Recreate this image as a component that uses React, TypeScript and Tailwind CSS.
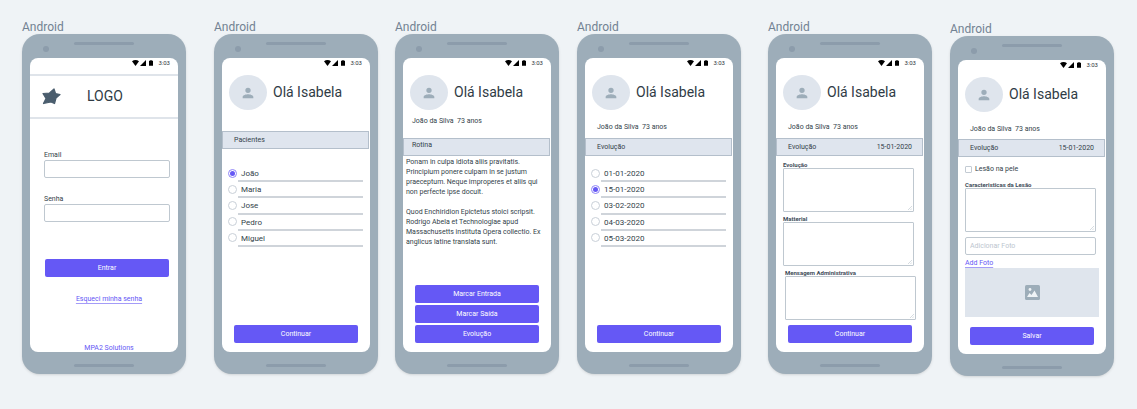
import type { ReactNode } from "react";

function StatusBar() {
  return (
    <div className="flex h-2.5 shrink-0 items-center justify-end gap-[3px] pr-2 text-black">
      <svg viewBox="0 0 24 20" className="h-[6px] w-[7px]" fill="currentColor" aria-hidden="true">
        <path d="M0 4C7-1.500 17-1.500 24 4L12 20Z" />
      </svg>
      <svg viewBox="0 0 20 20" className="-ml-[2px] size-[6px]" fill="currentColor" aria-hidden="true">
        <path d="M20 0V20H0Z" />
      </svg>
      <svg viewBox="0 0 14 20" className="h-[6px] w-[4px]" fill="currentColor" aria-hidden="true">
        <path d="M4 0H10V2H14V20H0V2H4Z" />
      </svg>
      <span className="ml-[2px] text-[6px] leading-[8px] text-[#30363c]">3:03</span>
    </div>
  );
}

function Phone({ className = "", children }: { className?: string; children: ReactNode }) {
  return (
    <section className={"flex min-w-0 flex-1 flex-col " + className}>
      <h2 className="h-3.5 text-[12px] leading-[14px] text-[#728292]">Android</h2>
      <div className="flex flex-col rounded-[18px] bg-[#9dadb9] px-2 shadow-sm">
        <div className="grid h-6 grid-cols-[1fr_60px_1fr] items-start">
          <span className="mt-3 ml-[13px] size-1.5 rounded-full bg-[#8c9cab]" />
          <span className="mt-2 h-[3px] rounded-full bg-[#8c9cab]" />
        </div>
        <div className="flex min-h-[294px] flex-col overflow-hidden rounded-[8px] bg-white">
          <StatusBar />
          {children}
        </div>
        <div className="flex h-[22px] justify-center pt-3">
          <span className="h-[3px] w-[60px] rounded-full bg-[#8c9cab]" />
        </div>
      </div>
    </section>
  );
}

function Greeting() {
  return (
    <div className="mt-[7px] flex items-center gap-1.5 pl-[7px]">
      <span className="flex h-[35px] w-[38px] shrink-0 items-center justify-center rounded-[50%] bg-[#dfe5ed]">
        <svg viewBox="0 0 24 24" className="size-4 text-[#9dadb9]" fill="currentColor" aria-hidden="true">
          <path d="M12 12a4 4 0 1 0 0-8 4 4 0 0 0 0 8zm0 2c-2.700 0-8 1.300-8 4v2h16v-2c0-2.700-5.300-4-8-4z" />
        </svg>
      </span>
      <h3 className="pb-0.5 text-[14px] leading-[18px] whitespace-nowrap text-[#2f3b45]">Olá Isabela</h3>
    </div>
  );
}

function Patient({ className }: { className: string }) {
  return (
    <p className={"text-[7px] leading-[8px] whitespace-pre text-[#333f4a] " + className}>
      {"João da Silva  73 anos"}
    </p>
  );
}

function Band({ className, title, date }: { className: string; title: string; date?: string }) {
  return (
    <div
      className={
        "mr-px flex h-[18px] shrink-0 justify-between border border-[#b4bfcb] bg-[#dfe5ee] pr-2.5 text-[7px] leading-[8px] text-[#333f4a] " +
        className
      }
    >
      <span>{title}</span>
      {date && <span>{date}</span>}
    </div>
  );
}

function Button({ children }: { children: ReactNode }) {
  return (
    <button
      type="button"
      className="block h-[18px] w-full shrink-0 rounded-[2px] bg-[#6558f5] pt-px text-center text-[7px] leading-[17px] text-white"
    >
      {children}
    </button>
  );
}

function Actions({ children }: { children: ReactNode }) {
  return <div className="mt-auto flex flex-col gap-[2px] pr-3 pb-[9px] pl-3">{children}</div>;
}

function Choices({ name, items, selected }: { name: string; items: string[]; selected: string }) {
  return (
    <div role="radiogroup" aria-label={name} className="grid h-[81px] auto-rows-fr pr-[7px] pl-[6px]">
      {items.map((item) => (
        <label key={item} className="flex items-center text-[8px] leading-[10px] text-[#333f4a]">
          <input
            type="radio"
            name={name}
            defaultChecked={item === selected}
            className="mb-0.5 size-[9px] shrink-0 appearance-none rounded-full border border-[#c9d0d8] bg-white bg-clip-content p-px checked:border-[#8f85f7] checked:bg-[#6558f5]"
          />
          <span className="ml-px flex h-full flex-1 items-center border-b-2 border-[#cfd4da] pt-0.5 pl-[3px]">{item}</span>
        </label>
      ))}
    </div>
  );
}

function Area({ id, label, className }: { id: string; label: string; className: string }) {
  return (
    <div className={className}>
      <label htmlFor={id} className="block text-[6px] leading-[7px] font-bold text-[#3f4d5a]">
        {label}
      </label>
      <div className="relative">
        <textarea
          id={id}
          className="block h-11 w-full resize-none rounded-[1px] border border-[#bfc8d0] bg-white p-1 text-[7px] leading-[8px]"
        />
        <svg viewBox="0 0 5 5" className="absolute right-[2px] bottom-[2px] size-[4px]" stroke="#bfc8d0" aria-hidden="true">
          <path d="M0 5L5 0M3 5L5 3" strokeWidth="0.800" />
        </svg>
      </div>
    </div>
  );
}

function Field({ id, label, type, className }: { id: string; label: string; type: string; className: string }) {
  return (
    <div className={className}>
      <label htmlFor={id} className="mb-px block text-[7px] leading-[8px] text-[#333f4a]">
        {label}
      </label>
      <input
        id={id}
        type={type}
        className="block h-[18px] w-full rounded-[2px] border border-[#bfc8d0] bg-white px-1 text-[7px]"
      />
    </div>
  );
}

const linkStyle = "text-[7px] leading-[8px] text-[#6558f5] underline decoration-[#a49cf8] underline-offset-2";

export default function App() {
  return (
    <main className="flex min-h-screen items-start bg-[#eff3f6] pt-5 pr-[23px] pb-8 pl-[22px] font-['Roboto','Liberation_Sans',sans-serif]">
      <Phone>
        <header className="mt-1.5 flex h-[45px] items-center border-y-2 border-[#dfe4ea] pl-3">
          <svg viewBox="0 0 38 34" className="h-[17px] w-[19px] text-[#4b5e6e]" fill="currentColor" aria-hidden="true">
            <path
              d="M24 2L27 11L36 13L28 20L25 31L18 28L3 31L8 21L2 11L15 10Z"
              stroke="currentColor"
              strokeWidth="2.500"
              strokeLinejoin="round"
            />
          </svg>
          <h3 className="ml-[26px] pb-0.5 text-[14px] leading-[18px] text-[#2f3b45]">LOGO</h3>
        </header>
        <form className="mt-8 flex flex-1 flex-col pr-2 pl-3.5">
          <Field id="email" label="Email" type="email" className="" />
          <Field id="senha" label="Senha" type="password" className="mt-[17px]" />
          <div className="mt-[37px] px-px">
            <Button>Entrar</Button>
          </div>
          <div className="mt-[18px] flex justify-center pl-1">
            <a href="#senha" className={linkStyle}>Esqueci minha senha</a>
          </div>
          <div className="mt-auto flex justify-center pl-1">
            <a href="#mpa2" className={linkStyle}>MPA2 Solutions</a>
          </div>
        </form>
      </Phone>

      <Phone className="ml-7">
        <Greeting />
        <Band className="mt-[21px] pt-1 pl-[11px]" title="Pacientes" />
        <div className="mt-[17px]">
          <Choices name="Pacientes" items={["João", "Maria", "Jose", "Pedro", "Miguel"]} selected="João" />
        </div>
        <Actions>
          <Button>Continuar</Button>
        </Actions>
      </Phone>

      <Phone className="ml-[17px]">
        <Greeting />
        <Patient className="mt-[7px] pl-[9px]" />
        <Band className="mt-[13px] pt-[2px] pl-2" title="Rotina" />
        <div className="flex flex-col gap-2.5 pt-px pr-1.5 pl-[3px] text-[7px] leading-[10px] text-[#333f4a]">
          <p>
            Ponam in culpa idiota aliis pravitatis.
            <br />
            Principium ponere culpam in se justum
            <br />
            praeceptum. Neque improperes et aliis qui
            <br />
            non perfecte ipse docuit.
          </p>
          <p>
            Quod Enchiridion Epictetus stoici scripsit.
            <br />
            Rodrigo Abela et Technologiae apud
            <br />
            Massachusetts instituta Opera collectio. Ex
            <br />
            anglicus latine translata sunt.
          </p>
        </div>
        <Actions>
          <Button>Marcar Entrada</Button>
          <Button>Marcar Saída</Button>
          <Button>Evolução</Button>
        </Actions>
      </Phone>

      <Phone className="ml-[18px]">
        <Greeting />
        <Patient className="mt-[13px] pl-3" />
        <Band className="mt-[7px] pt-1 pl-[11px]" title="Evolução" />
        <div className="mt-[10px]">
          <Choices
            name="Evolução"
            items={["01-01-2020", "15-01-2020", "03-02-2020", "04-03-2020", "05-03-2020"]}
            selected="15-01-2020"
          />
        </div>
        <Actions>
          <Button>Continuar</Button>
        </Actions>
      </Phone>

      <Phone className="ml-[27px]">
        <Greeting />
        <Patient className="mt-[13px] pl-3" />
        <Band className="mt-[7px] pt-1 pl-[11px]" title="Evolução" date="15-01-2020" />
        <Area id="evolucao" label="Evolução" className="mt-[5px] pr-2.5 pl-[7px]" />
        <Area id="matterial" label="Matterial" className="mt-[3px] pr-2.5 pl-[7px]" />
        <Area id="mensagem" label="Mensagem Administrativa" className="mt-[3px] pr-2 pl-[9px]" />
        <Actions>
          <Button>Continuar</Button>
        </Actions>
      </Phone>

      <Phone className="ml-[18px] pt-0.5">
        <Greeting />
        <Patient className="mt-[13px] pl-3" />
        <Band className="mt-1.5 pt-1 pl-[11px]" title="Evolução" date="15-01-2020" />
        <label className="mt-2 flex items-center gap-[3px] pl-[7px] text-[7px] leading-[8px] text-[#333f4a]">
          <input
            type="checkbox"
            className="size-[7px] appearance-none rounded-[1px] border border-[#c3cbd3] bg-white checked:bg-[#6558f5]"
          />
          Lesão na pele
        </label>
        <Area id="lesao" label="Caracteristicas da Lesão" className="mt-2 pr-2.5 pl-[7px]" />
        <div className="mt-[5px] flex flex-col items-start pr-[7px] pl-[7px]">
          <div className="w-full pr-[3px]">
            <input
              type="text"
              aria-label="Adicionar Foto"
              placeholder="Adicionar Foto"
              className="block h-[18px] w-full rounded-[2px] border border-[#bfc8d0] bg-white px-1 text-[7px] placeholder:text-[#bcc6cf]"
            />
          </div>
          <a href="#foto" className={"mt-1 block " + linkStyle}>Add Foto</a>
          <div className="mt-px flex h-[49px] w-full items-center justify-center bg-[#dfe5ed]">
            <svg viewBox="0 0 15 15" className="size-[15px]" aria-hidden="true">
              <rect width="15" height="15" rx="1.500" fill="#9dadb9" />
              <circle cx="5" cy="4.500" r="1.400" fill="#eff3f6" />
              <path d="M2 12L4.500 8L6.500 10L9.500 5.500L13 12Z" fill="#eff3f6" />
            </svg>
          </div>
        </div>
        <Actions>
          <Button>Salvar</Button>
        </Actions>
      </Phone>
    </main>
  );
}
